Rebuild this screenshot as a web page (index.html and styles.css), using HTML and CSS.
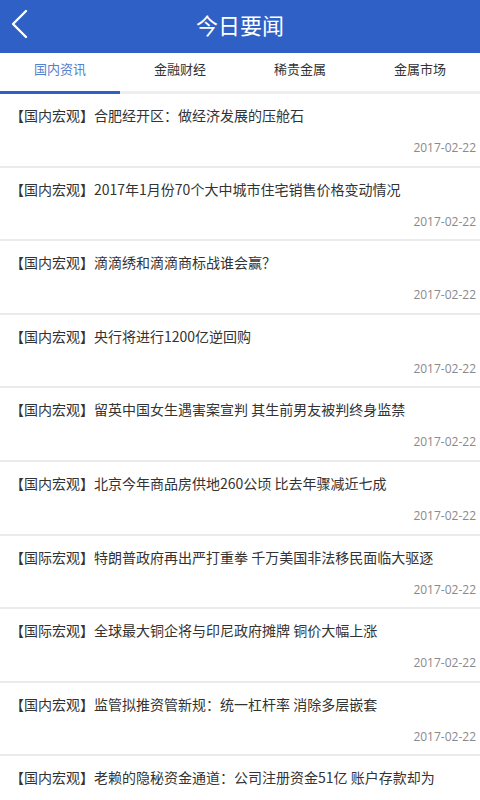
FILE: index.html
```html
<!DOCTYPE html>
<html lang="zh-CN">
<head>
<meta charset="utf-8">
<title>今日要闻</title>
<link rel="stylesheet" href="styles.css">
</head>
<body>
<div class="app">
  <header class="topbar">
    <svg class="back" width="20" height="30" viewBox="0 0 20 30"><path d="M17 2 L4 15 L17 28" fill="none" stroke="#fff" stroke-width="2.4" stroke-linecap="round" stroke-linejoin="round"/></svg>
    <h1 class="title">今日要闻</h1>
  </header>
  <nav class="tabs">
    <div class="tab active">国内资讯</div>
    <div class="tab">金融财经</div>
    <div class="tab">稀贵金属</div>
    <div class="tab">金属市场</div>
  </nav>
  <ul class="list">
    <li class="item"><p class="headline">【国内宏观】合肥经开区：做经济发展的压舱石</p><span class="date">2017-02-22</span></li>
    <li class="item"><p class="headline">【国内宏观】2017年1月份70个大中城市住宅销售价格变动情况</p><span class="date">2017-02-22</span></li>
    <li class="item"><p class="headline">【国内宏观】滴滴绣和滴滴商标战谁会赢？</p><span class="date">2017-02-22</span></li>
    <li class="item"><p class="headline">【国内宏观】央行将进行1200亿逆回购</p><span class="date">2017-02-22</span></li>
    <li class="item"><p class="headline">【国内宏观】留英中国女生遇害案宣判 其生前男友被判终身监禁</p><span class="date">2017-02-22</span></li>
    <li class="item"><p class="headline">【国内宏观】北京今年商品房供地260公顷 比去年骤减近七成</p><span class="date">2017-02-22</span></li>
    <li class="item"><p class="headline">【国际宏观】特朗普政府再出严打重拳 千万美国非法移民面临大驱逐</p><span class="date">2017-02-22</span></li>
    <li class="item"><p class="headline">【国际宏观】全球最大铜企将与印尼政府摊牌 铜价大幅上涨</p><span class="date">2017-02-22</span></li>
    <li class="item"><p class="headline">【国内宏观】监管拟推资管新规：统一杠杆率 消除多层嵌套</p><span class="date">2017-02-22</span></li>
    <li class="item"><p class="headline">【国内宏观】老赖的隐秘资金通道：公司注册资金51亿 账户存款却为</p></li>
  </ul>
</div>
</body>
</html>
```
FILE: styles.css
```css
* { box-sizing: border-box; }
html, body { margin: 0; padding: 0; }
body {
  width: 480px;
  height: 800px;
  overflow: hidden;
  background: #fff;
  font-family: "Noto Sans CJK SC", "Noto Sans", sans-serif;
  color: #333;
}
.app { width: 480px; }
.topbar {
  height: 53px;
  background: #2e60c6;
  display: flex;
  align-items: center;
  justify-content: center;
  position: relative;
}
.back {
  position: absolute;
  left: 9px;
  top: 9px;
}
.title {
  margin: 0;
  color: #fff;
  font-size: 22px;
  font-weight: 400;
  line-height: 1;
  padding-bottom: 6px;
}
.tabs {
  display: flex;
  height: 41px;
  border-bottom: 3px solid #eeeeee;
}
.tab {
  flex: 1;
  display: flex;
  align-items: center;
  justify-content: center;
  font-size: 13px;
  color: #333;
  padding-bottom: 8px;
  margin-bottom: -3px;
  border-bottom: 3px solid transparent;
}
.tab.active {
  color: #5580cc;
  border-bottom-color: #2e60c6;
}
.list {
  list-style: none;
  margin: 0;
  padding: 0;
}
.item {
  height: 73.6px;
  border-bottom: 2px solid #ebebeb;
  display: flex;
  flex-direction: column;
  padding: 11px 4px 0 10px;
}
.headline {
  margin: 0;
  font-size: 14px;
  line-height: 20px;
  color: #333;
  white-space: nowrap;
  overflow: hidden;
}
.date {
  align-self: flex-end;
  margin-top: 15px;
  font-family: "Open Sans", "Noto Sans", sans-serif;
  font-size: 12px;
  line-height: 16px;
  color: #8a8a8a;
}
```
